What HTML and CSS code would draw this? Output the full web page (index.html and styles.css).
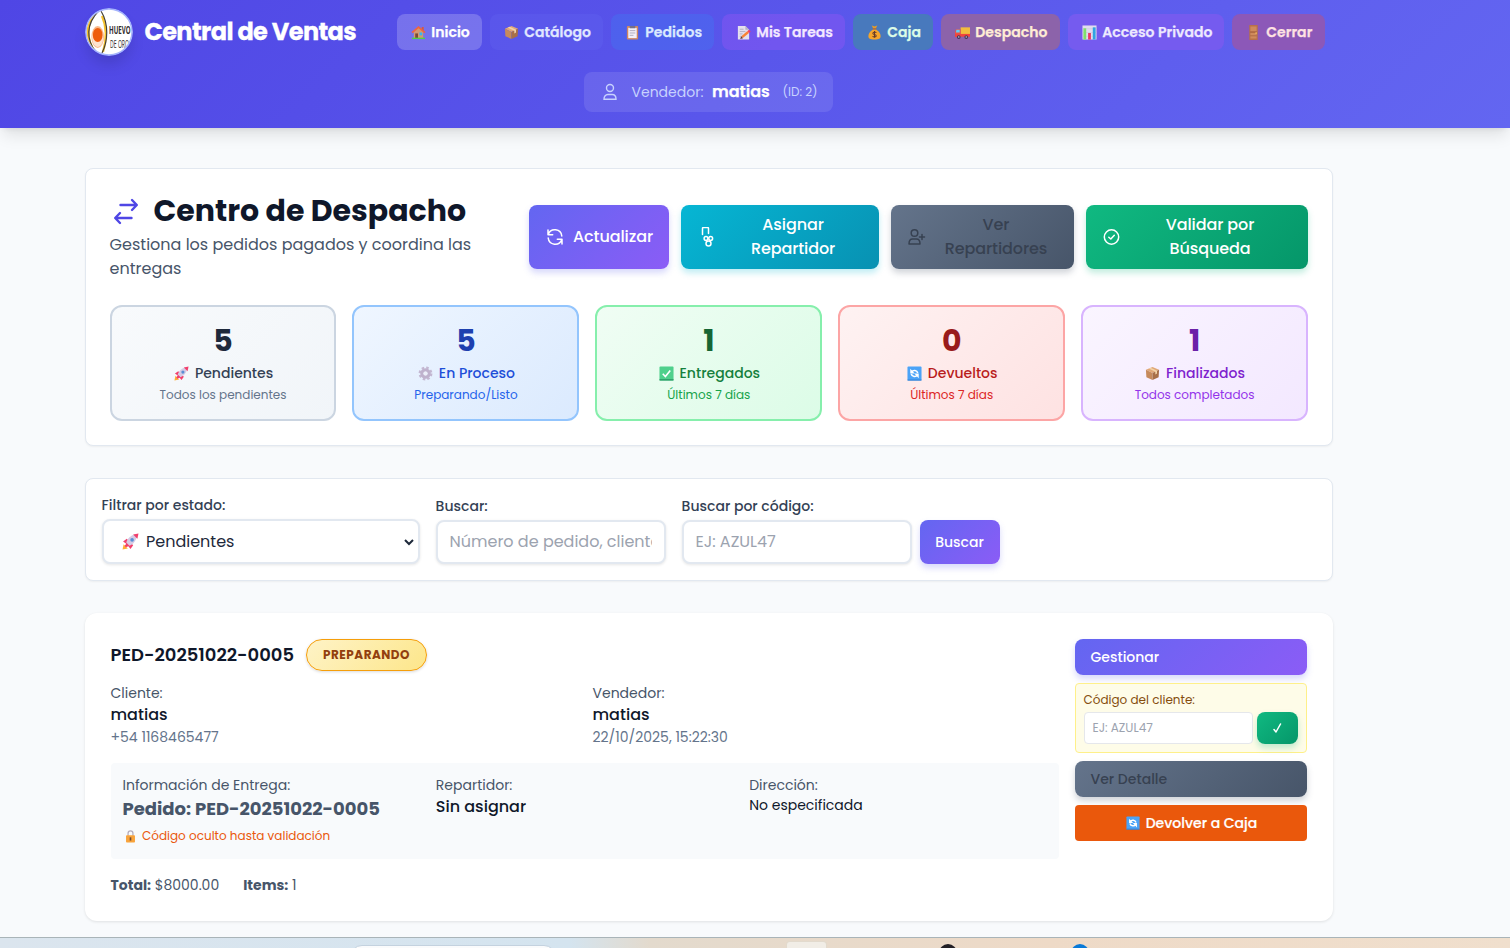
FILE: index.html
```html
<!DOCTYPE html>
<html lang="es">
<head>
<meta charset="utf-8">
<title>Central de Ventas</title>
<link rel="stylesheet" href="styles.css">
</head>
<body>
<svg class="sprite" aria-hidden="true">
  <symbol id="house" viewBox="0 0 16 16"><path fill="#d39a70" d="M3 7l5-5 5 5v7H3z"/><path fill="#f0643f" d="M8 1l7.500 6.500-1.200 1.200L8 3.500 1.700 8.700.5 7.500z"/><path fill="#d9573b" d="M11.500 2h2v4l-2-2z"/><path fill="#7a4a35" d="M4.500 9h3v5h-3z"/><path fill="#35b6f2" d="M9 8h3v3H9z"/><path fill="#4fd04b" d="M1 13.500h14V15H1z"/></symbol>
  <symbol id="box" viewBox="0 0 16 16"><path fill="#e0a878" d="M8 1l7 3-7 3.500L1 4z"/><path fill="#c68a5c" d="M1 4l7 3.500V15l-6.500-3z"/><path fill="#a86f48" d="M15 4L8 7.500V15l6.500-3z"/><path fill="#f2d3a8" d="M4 2.700L11 6v3l1.800-1V5L6 1.900z"/></symbol>
  <symbol id="clip" viewBox="0 0 16 16"><rect x="2" y="1" width="12" height="14.500" rx="1" fill="#d0875f"/><path fill="#f3f0fa" d="M3.500 3h9v11h-9z"/><path fill="#75708a" d="M5 1h6v2.500H5z"/><path stroke="#9d98ae" stroke-width=".8" d="M5 6h6M5 8.500h6M5 11h4"/></symbol>
  <symbol id="memo" viewBox="0 0 16 16"><path fill="#e4e0ee" d="M2 1h8l4 4v10.500H2z"/><path fill="#b5afc4" d="M10 1l4 4h-4z"/><path stroke="#a7a1b5" stroke-width=".8" d="M4 4.500h4M4 7h6M4 9.500h3M4 12h2"/><path stroke="#f98436" stroke-width="2.600" d="M6.500 13L13 7.500"/><path stroke="#f43e62" stroke-width="2.600" d="M13 7.500l1.800-1.500"/><path fill="#5a3838" d="M4.500 15l1-3 2 2z"/></symbol>
  <symbol id="bag" viewBox="0 0 16 16"><path fill="#e79c27" d="M5 .5l3 1 3-1-1.500 3h-3z"/><path fill="#c46b27" d="M6 3.500h4V5H6z"/><path fill="#f5a52b" d="M6 5h4c3 2 4.500 4 4.500 7 0 2.500-1.500 3.500-6.500 3.500S1.500 14.500 1.500 12C1.500 9 3 7 6 5z"/><path fill="none" stroke="#633a29" stroke-width="1.100" d="M10 8.200C8.500 7 6 7.600 6.300 9.200c.3 1.300 3.400.8 3.500 2.200.1 1.500-2.500 1.900-3.900.8M8 6.500v7.200"/></symbol>
  <symbol id="truck" viewBox="0 0 16 16"><path fill="#f2bd3e" d="M6 2.500h10v8H6z"/><path fill="#f0533f" d="M0 8l1-3.500h5v8H0z"/><path fill="#5fd0f5" d="M1.500 5H5v3H1z"/><path fill="#f0443e" d="M0 9.500h16v3H0z"/><circle cx="4" cy="12.800" r="2" fill="#443856"/><circle cx="12" cy="12.800" r="2" fill="#443856"/><circle cx="4" cy="12.800" r=".8" fill="#c9c2d8"/><circle cx="12" cy="12.800" r=".8" fill="#c9c2d8"/></symbol>
  <symbol id="chart" viewBox="0 0 16 16"><path fill="#e1dcef" d="M.5.500h15v15H.5z"/><path stroke="#c8c1da" stroke-width=".5" d="M.5 4h15M.5 8h15M.5 12h15"/><path fill="#7ee06c" d="M1.500 3.500h3v12h-3z"/><path fill="#ed3565" d="M6.500 8.500h3v7h-3z"/><path fill="#2fa3e3" d="M11.500 2.500h3v13h-3z"/></symbol>
  <symbol id="door" viewBox="0 0 16 16"><path fill="#b87048" d="M3.500 0h9v16h-9z"/><path fill="#cf8a5c" d="M4.700 1.500h6.600v5.200H4.700zM4.700 8.500h6.600v6H4.700z"/><path stroke="#a5613c" stroke-width=".8" d="M4.500 7.500h7M4.500 11.500h7"/><circle cx="10.800" cy="8.500" r=".9" fill="#f5bd58"/></symbol>
  <symbol id="rocket" viewBox="0 0 16 16"><path fill="#ffad36" d="M.5 15.500l1-5 4 4z"/><path fill="#f23f6c" d="M1 8l3.500-2.500 6 6L8 15l-2-2.500-2.500 1-1-1.500L4 10z"/><path fill="#d5cbe4" d="M4 9c1-4 5-7 8-7.500l2 2C13 7 11 10.500 7 12z"/><path fill="#f23f6c" d="M10.500 1.500L15.500.5l-1 5z"/><circle cx="9.500" cy="6.500" r="1.700" fill="#5a8fd6"/></symbol>
  <symbol id="gear" viewBox="0 0 16 16"><circle cx="8" cy="8" r="6.200" fill="none" stroke="#c4b8d2" stroke-width="2.400" stroke-dasharray="2.700 2.170"/><circle cx="8" cy="8" r="3.900" fill="none" stroke="#bfb2cd" stroke-width="3.400"/><circle cx="8" cy="8" r="2.200" fill="#eceff9"/></symbol>
  <symbol id="check" viewBox="0 0 16 16"><rect x=".5" y=".5" width="15" height="15" rx="1" fill="#4fd08c"/><path fill="#2e9c68" d="M.5 14h15v1.500H.5z"/><path fill="none" stroke="#fff" stroke-width="1.700" d="M4 8.300l2.800 2.900L12 4.800"/></symbol>
  <symbol id="sync" viewBox="0 0 16 16"><rect x=".5" y=".5" width="15" height="15" rx="1" fill="#4ba3f7"/><path fill="#2e7bd0" d="M.5 14.500h15v1H.5z"/><path fill="none" stroke="#fff" stroke-width="1.700" d="M5 6.300c1.500-2.300 5.500-2 6.500 1.200M11 9.700C9.500 12 5.500 11.700 4.500 8.500"/><path fill="#fff" d="M3.500 3v5h4.700zM12.500 13V8H7.800z"/></symbol>
  <symbol id="lock" viewBox="0 0 16 16"><path fill="none" stroke="#b5adbd" stroke-width="1.600" d="M5 7V4a3 3 0 0 1 6 0v3"/><rect x="2.500" y="6.500" width="11" height="9" rx="1" fill="#f8a33b"/><path fill="#704b38" d="M7 9h2v4H7z"/></symbol>
</svg>

<header class="header">
  <div class="container">
    <div class="topbar">
      <svg class="logo" viewBox="0 0 48 48">
        <defs><clipPath id="round"><circle cx="24" cy="24" r="22.300"/></clipPath></defs>
        <circle cx="24" cy="24" r="24" fill="#a5b4fc"/>
        <g clip-path="url(#round)">
          <path fill="#fff" d="M0 0h48v48H0z"/>
          <path fill="#f6c22d" d="M8 4C-1 14-1 34 9 45l2-2C3 33 2 17 11 4z"/>
          <path fill="none" stroke="#f6c22d" stroke-width="2.200" d="M17 8c5 11 5 22 1 36"/>
          <path fill="none" stroke="#46423a" stroke-width="1.200" d="M13.500 3C1 16 1 32 11 44M16 3c8 13 7 30 1 42"/>
          <ellipse cx="12.700" cy="29" rx="6.300" ry="11" fill="#f9b98a"/>
          <ellipse cx="12.700" cy="30" rx="5.500" ry="9" fill="#fff" opacity=".6"/>
          <ellipse cx="12.700" cy="27" rx="4.900" ry="7" fill="#ee5c0c"/>
          <text class="logo-a" x="24" y="26" textLength="21.500" lengthAdjust="spacingAndGlyphs">HUEVO</text>
          <text class="logo-b" x="25" y="39.500" textLength="19" lengthAdjust="spacingAndGlyphs">DE ORO</text>
        </g>
      </svg>
      <h1 class="brand">Central de Ventas</h1>
      <nav class="nav">
        <a class="tab tab-home"><svg><use href="#house"/></svg>Inicio</a>
        <a class="tab tab-cat"><svg><use href="#box"/></svg>Catálogo</a>
        <a class="tab tab-ped"><svg><use href="#clip"/></svg>Pedidos</a>
        <a class="tab tab-task"><svg><use href="#memo"/></svg>Mis Tareas</a>
        <a class="tab tab-caja"><svg><use href="#bag"/></svg>Caja</a>
        <a class="tab tab-desp"><svg><use href="#truck"/></svg>Despacho</a>
        <a class="tab tab-priv"><svg><use href="#chart"/></svg>Acceso Privado</a>
        <a class="tab tab-exit"><svg><use href="#door"/></svg>Cerrar</a>
      </nav>
    </div>
    <div class="seller">
      <svg viewBox="0 0 16 20"><circle cx="8" cy="6" r="3.500"/><path d="M2 17.300c0-3 1.800-4.800 3.800-4.800h4.400c2 0 3.800 1.800 3.800 4.800z"/></svg>
      <span class="seller-label">Vendedor:</span><strong>matias</strong><small>(ID: 2)</small>
    </div>
  </div>
</header>

<main class="main">
  <section class="card dispatch">
    <div class="dispatch-head">
      <div class="intro">
        <h2><svg viewBox="0 0 32 32"><path d="M10.500 10h16M22 5l4.800 5-4.800 5M21.500 23H5.500M10 18l-4.800 5 4.800 5"/></svg><span>Centro de Despacho</span></h2>
        <p>Gestiona los pedidos pagados y coordina las entregas</p>
      </div>
      <button class="btn violet act-refresh"><svg viewBox="0 0 18 18"><path d="M2 2v4.700h4.700M2.300 6.300A7 7 0 0 1 15.800 8M16 16v-4.700h-4.700M15.700 11.700A7 7 0 0 1 2.200 10"/></svg><span>Actualizar</span></button>
      <button class="btn cyan act-assign"><svg viewBox="0 0 18 20"><path d="M4.500 7.500V1.500q0-1 1-1h4q1 0 1 1v5"/><circle cx="8" cy="11.500" r="1.900"/><circle cx="12.700" cy="11.500" r="1.900"/><circle cx="10.500" cy="16.500" r="2.500"/></svg><span>Asignar<br>Repartidor</span></button>
      <button class="btn slate act-view"><svg viewBox="0 0 18 18"><circle cx="6.500" cy="5" r="3.300"/><path d="M1 16c0-3 1.500-5 3.500-5h4c2 0 3.500 2 3.500 5zM14 6.500v5M11.500 9h5"/></svg><span>Ver<br>Repartidores</span></button>
      <button class="btn green act-check"><svg viewBox="0 0 18 18"><circle cx="8.500" cy="9" r="7.200"/><path d="M5.800 9.200l2 1.800 3.500-3.800"/></svg><span>Validar por<br>Búsqueda</span></button>
    </div>
    <div class="stats">
      <div class="stat s-gray"><b>5</b><div class="stat-name"><svg><use href="#rocket"/></svg>Pendientes</div><small>Todos los pendientes</small></div>
      <div class="stat s-blue"><b>5</b><div class="stat-name"><svg><use href="#gear"/></svg>En Proceso</div><small>Preparando/Listo</small></div>
      <div class="stat s-green"><b>1</b><div class="stat-name"><svg><use href="#check"/></svg>Entregados</div><small>Últimos 7 días</small></div>
      <div class="stat s-red"><b>0</b><div class="stat-name"><svg><use href="#sync"/></svg>Devueltos</div><small>Últimos 7 días</small></div>
      <div class="stat s-purple"><b>1</b><div class="stat-name"><svg><use href="#box"/></svg>Finalizados</div><small>Todos completados</small></div>
    </div>
  </section>

  <section class="card filters">
    <div class="field field-state"><label>Filtrar por estado:</label>
      <div class="control select"><svg class="emoji"><use href="#rocket"/></svg><span>Pendientes</span><svg class="chevron" viewBox="0 0 10 8"><path d="M1 2l4 4 4-4"/></svg></div></div>
    <div class="field field-text"><label>Buscar:</label><div class="control"><span>Número de pedido, cliente</span></div></div>
    <div class="field field-text field-code"><label>Buscar por código:</label><div class="control"><span>EJ: AZUL47</span></div></div>
    <button class="btn violet search">Buscar</button>
  </section>

  <section class="card order">
    <div class="order-body">
      <div class="order-title"><h3>PED-20251022-0005</h3><span class="badge">PREPARANDO</span></div>
      <div class="people">
        <div><p class="muted">Cliente:</p><p class="name">matias</p><p class="detail">+54 1168465477</p></div>
        <div><p class="muted">Vendedor:</p><p class="name">matias</p><p class="detail">22/10/2025, 15:22:30</p></div>
      </div>
      <div class="delivery">
        <div><p class="muted">Información de Entrega:</p><p class="ref">Pedido: PED-20251022-0005</p><p class="hidden-code"><svg><use href="#lock"/></svg>Código oculto hasta validación</p></div>
        <div><p class="muted">Repartidor:</p><p class="name">Sin asignar</p></div>
        <div><p class="muted">Dirección:</p><p class="address">No especificada</p></div>
      </div>
      <div class="totals"><span class="total"><b>Total:</b> $8000.00</span><span><b>Items:</b> 1</span></div>
    </div>
    <div class="actions">
      <button class="btn violet wide">Gestionar</button>
      <div class="code">
        <label>Código del cliente:</label>
        <div class="code-row"><div class="code-input">EJ: AZUL47</div><button class="btn green ok"><svg viewBox="0 0 10 12"><path d="M1 7.500l2 2.500L7.500 2"/></svg></button></div>
      </div>
      <button class="btn slate wide">Ver Detalle</button>
      <button class="return"><svg><use href="#sync"/></svg>Devolver a Caja</button>
    </div>
  </section>
</main>

<footer class="taskbar">
  <i class="task-search"></i><i class="task-app"></i><i class="task-dot"></i><i class="task-dot blue"></i>
</footer>
</body>
</html>
```
FILE: styles.css
```css
* { box-sizing: border-box; }
body, h1, h2, h3, p { margin: 0; }
body {
  width: 1510px; height: 948px; overflow: hidden;
  display: flex; flex-direction: column;
  font-family: Poppins, Inter, sans-serif;
  font-feature-settings: "cv11";
  font-size: 14px; line-height: 20px;
  color: #0f172a; background: #f8fafc;
}
.sprite { position: absolute; width: 0; height: 0; }
svg { flex: none; }
button { font: inherit; font-feature-settings: inherit; border: 0; padding: 0; margin: 0; }
small { font-weight: 400; }

/* Header */
.header {
  flex: none; height: 128px; padding-top: 8px;
  background: linear-gradient(135deg, #4f46e5, #6366f1);
  box-shadow: 0 10px 15px -3px rgba(0,0,0,.1), 0 4px 6px -4px rgba(0,0,0,.1);
}
.container { width: 1248px; margin-left: 85px; }
.topbar { display: flex; align-items: center; height: 48px; }
.logo { width: 48px; height: 48px; border-radius: 50%; box-shadow: 0 10px 15px -3px rgba(0,0,0,.15); }
.logo-a { font: 700 10px "Open Sans", sans-serif; fill: #2f2c2b; }
.logo-b { font: 400 10px "Open Sans", sans-serif; fill: #2f2c2b; }
.brand { width: 252px; margin-left: 11.500px; margin-right: .5px; font-size: 24px; line-height: 32px; font-weight: 700; letter-spacing: -.6px; color: #fff; white-space: nowrap; -webkit-text-stroke: .3px #fff; }
.nav { display: flex; gap: 8px; }
.tab { display: flex; align-items: center; height: 36px; padding-left: 13px; border-radius: 8px; font-weight: 600; letter-spacing: .03px; white-space: nowrap; -webkit-text-stroke: .25px currentColor; }
.tab svg { width: 15px; height: 15px; margin: 0 5.300px 0 1px; }
.tab-home { width: 85px; color: #fff; background: rgba(255,255,255,.2); }
.tab-cat { width: 113px; color: #e0e7ff; background: rgba(99,102,241,.3); }
.tab-ped { width: 103px; color: #dbeafe; background: rgba(59,130,246,.3); }
.tab-task { width: 123px; color: #f3e8ff; background: rgba(168,85,247,.3); }
.tab-caja { width: 80px; color: #dcfce7; background: #4879bd; }
.tab-desp { width: 119px; color: #ffedd5; background: #8c63aa; }
.tab-priv { width: 156px; color: #ede9fe; background: #755bef; }
.tab-exit { width: 93px; color: #fee2e2; background: #8c58b8; }
.seller { display: flex; align-items: center; width: 249px; height: 40px; margin: 16px 0 0 499px; padding-left: 18px; border-radius: 8px; background: rgba(255,255,255,.1); color: #c7d2fe; }
.seller svg { width: 16px; height: 20px; margin-right: 13.500px; fill: none; stroke: #c7d2fe; stroke-width: 1.4; }
.seller-label { width: 80.500px; }
.seller strong { width: 70.500px; font-size: 16px; font-weight: 600; -webkit-text-stroke: .25px #fff; color: #fff; }
.seller small { font-size: 12px; }

/* Cards */
.main { flex: none; height: 809px; width: 1248px; margin-left: 85px; padding-top: 40px; }
.card { background: #fff; border: 1px solid #e2e8f0; border-radius: 8px; box-shadow: 0 1px 2px rgba(0,0,0,.05); }
.btn { display: flex; align-items: center; border-radius: 8px; color: #fff; }
.btn svg { fill: none; stroke: currentColor; stroke-width: 1.5; stroke-linecap: round; stroke-linejoin: round; }
.violet { background: linear-gradient(135deg, #6366f1, #8b5cf6); box-shadow: 0 4px 6px rgba(99,102,241,.25); }
.cyan { background: linear-gradient(135deg, #06b6d4, #0891b2); box-shadow: 0 4px 6px rgba(6,182,212,.25); }
.slate { background: linear-gradient(135deg, #64748b, #475569); box-shadow: 0 4px 6px rgba(71,85,105,.25); color: #374151; }
.green { background: linear-gradient(135deg, #10b981, #059669); box-shadow: 0 4px 6px rgba(16,185,129,.25); }

.dispatch { height: 278px; padding: 24px; }
.dispatch-head { display: flex; align-items: center; gap: 12px; height: 88px; }
.intro { width: 407px; height: 88px; }
.intro h2 { display: flex; align-items: center; height: 36px; font-size: 30px; line-height: 36px; font-weight: 700; white-space: nowrap; }
.intro h2 svg { width: 32px; height: 32px; margin-right: 11.500px; fill: none; stroke: #4f46e5; stroke-width: 2.4; stroke-linecap: round; stroke-linejoin: round; }
.intro p { margin-top: 4px; margin-left: -.4px; width: 390px; font-size: 16px; line-height: 24px; color: #475569; }
.dispatch-head .btn { height: 64px; padding-left: 17px; font-size: 16px; line-height: 24px; font-weight: 500; }
.dispatch-head .btn svg { width: 18px; height: 18px; }
.dispatch-head .btn span { flex: 1; text-align: center; letter-spacing: -.1px; }
.act-refresh { width: 140px; padding-right: 7px; }
.act-assign { width: 198px; padding-right: 19px; }
.dispatch-head .act-assign svg { height: 20px; margin-right: 10px; }
.act-view { width: 183px; padding-right: 8px; }
.act-check { width: 222px; padding-right: 19px; }
.act-check svg { margin-right: 10px; }
.stats { display: grid; grid-template-columns: repeat(5, 1fr); gap: 16px; margin: 24px 0 0 -.4px; }
.stat { display: flex; flex-direction: column; align-items: center; gap: 4px; height: 116px; padding: 16px; border: 2px solid; border-radius: 12px; }
.stat b { font-size: 30px; line-height: 36px; font-weight: 700; }
.stat-name { display: flex; align-items: center; height: 20px; font-weight: 500; }
.stat-name svg { width: 15px; height: 15px; margin: 0 6px 0 1px; }
.stat small { font-size: 12px; line-height: 16px; }
.s-gray { border-color: #cbd5e1; background: linear-gradient(135deg, #f8fafc, #f1f5f9); color: #1e293b; }
.s-gray .stat-name { color: #334155; } .s-gray small { color: #64748b; }
.s-blue { border-color: #93c5fd; background: linear-gradient(135deg, #eff6ff, #dbeafe); color: #1e40af; }
.s-blue .stat-name { color: #1d4ed8; } .s-blue small { color: #2563eb; }
.s-green { border-color: #86efac; background: linear-gradient(135deg, #f0fdf4, #dcfce7); color: #166534; }
.s-green .stat-name { color: #15803d; } .s-green small { color: #16a34a; }
.s-red { border-color: #fca5a5; background: linear-gradient(135deg, #fef2f2, #fee2e2); color: #991b1b; }
.s-red .stat-name { color: #b91c1c; } .s-red small { color: #dc2626; }
.s-purple { border-color: #d8b4fe; background: linear-gradient(135deg, #faf5ff, #f3e8ff); color: #6b21a8; }
.s-purple .stat-name { color: #7e22ce; } .s-purple small { color: #9333ea; }

/* Filters */
.filters { display: flex; align-items: flex-end; height: 103px; margin-top: 32px; padding: 16px; }
.field label { display: block; margin-left: -.4px; font-weight: 500; color: #334155; }
.field-state { width: 318px; margin-right: 16px; }
.field-text { width: 230px; margin-right: 16px; }
.field-code { margin-right: 8px; }
.control { display: flex; align-items: center; height: 44px; margin-top: 4px; padding: 0 12px 0 11.500px; border: 2px solid #e2e8f0; border-radius: 8px; background: #fff; box-shadow: 0 1px 3px rgba(0,0,0,.1); font-size: 16px; line-height: 24px; color: #9ca3af; }
.control span { overflow: hidden; white-space: nowrap; }
.select { height: 45px; padding: 0 4px 0 18px; color: #1e293b; }
.control.select span { flex: 1; overflow: visible; }
.emoji { width: 17px; height: 17px; margin-right: 7px; }
.chevron { width: 10px; height: 8px; fill: none; stroke: #1e293b; stroke-width: 2; }
.search { width: 80px; height: 44px; padding-right: 1px; justify-content: center; font-weight: 500; }

/* Order */
.order { display: flex; gap: 16px; height: 308px; margin-top: 32px; padding: 25px; border: 0; border-radius: 12px; box-shadow: 0 1px 3px rgba(0,0,0,.1); }
.order-body { width: 949px; padding-left: .5px; }
.order-title { display: flex; align-items: center; gap: 12px; height: 32px; margin-top: 1px; }
.order-title h3 { width: 183.500px; font-size: 18px; font-weight: 600; white-space: nowrap; }
.badge { width: 121px; height: 32px; border: 1px solid #f59e0b; border-radius: 16px; background: linear-gradient(135deg, #fef3c7, #fde68a); box-shadow: 0 1px 3px rgba(0,0,0,.15); color: #92400e; font-size: 12px; line-height: 30px; font-weight: 700; letter-spacing: .5px; text-align: center; }
.people { display: grid; grid-template-columns: 1fr 1fr; gap: 15.500px; margin-top: 12px; }
.muted { color: #475569; }
.name { font-size: 16px; line-height: 24px; font-weight: 500; }
.detail { color: #64748b; }
.delivery { display: grid; grid-template-columns: repeat(3, 1fr); gap: 15.500px; height: 96px; margin-top: 16px; padding: 12px; border-radius: 4px; background: #f8fafc; }
.ref { font-size: 18px; line-height: 28px; font-weight: 700; color: #475569; white-space: nowrap; }
.hidden-code { display: flex; align-items: center; height: 16px; margin-top: 5px; font-size: 12px; color: #ea580c; white-space: nowrap; }
.hidden-code svg { width: 13px; height: 13px; margin: 0 5px 0 1.500px; }
.totals { display: flex; gap: 24px; margin-top: 16px; color: #475569; }
.totals b { font-weight: 700; }
.actions { width: 232px; display: flex; flex-direction: column; gap: 8px; padding-top: 1px; }
.wide { height: 36px; padding-left: 15.500px; font-weight: 500; }
.code { height: 70px; padding: 8px; border: 1px solid #fef08a; border-radius: 4px; background: #fefce8; color: #854d0e; }
.code label { display: block; margin-left: -.5px; font-size: 12px; line-height: 16px; }
.code-row { display: flex; gap: 4px; margin-top: 4px; }
.code-input { width: 169px; height: 32px; padding-left: 7.500px; border: 1px solid #e5e7eb; border-radius: 4px; background: #fff; font-size: 12px; line-height: 30px; color: #9ca3af; }
.ok { width: 41px; height: 32px; justify-content: center; }
.ok svg { width: 10px; height: 12px; }
.return { display: flex; align-items: center; justify-content: center; height: 36px; border-radius: 4px; background: #ea580c; color: #fff; font-weight: 500; -webkit-text-stroke: .2px #fff; }
.return svg { width: 14px; height: 14px; margin: 0 6px 0 1px; }

/* Taskbar */
.taskbar { display: flex; align-items: flex-start; height: 11px; overflow: hidden; border-top: 1px solid #a9b4b8; background: linear-gradient(90deg, #dbe5ee 0, #d4e4ef 570px, #e3dacd 650px, #eedac7 1050px, #f0dfcd); }
.task-search { width: 206px; height: 24px; margin: 7px 0 0 350px; border: 1px solid #c4d2df; border-radius: 12px; background: #fafbfc; }
.task-app { width: 39px; height: 24px; margin: 4px 0 0 231px; border-radius: 3px; background: #f1ede6; box-shadow: 0 0 0 1px #e2dacd; }
.task-dot { width: 18px; height: 18px; margin: 6px 0 0 113px; border-radius: 50%; background: #221f25; }
.blue { background: #0879d8; margin-left: 114px; }
```
